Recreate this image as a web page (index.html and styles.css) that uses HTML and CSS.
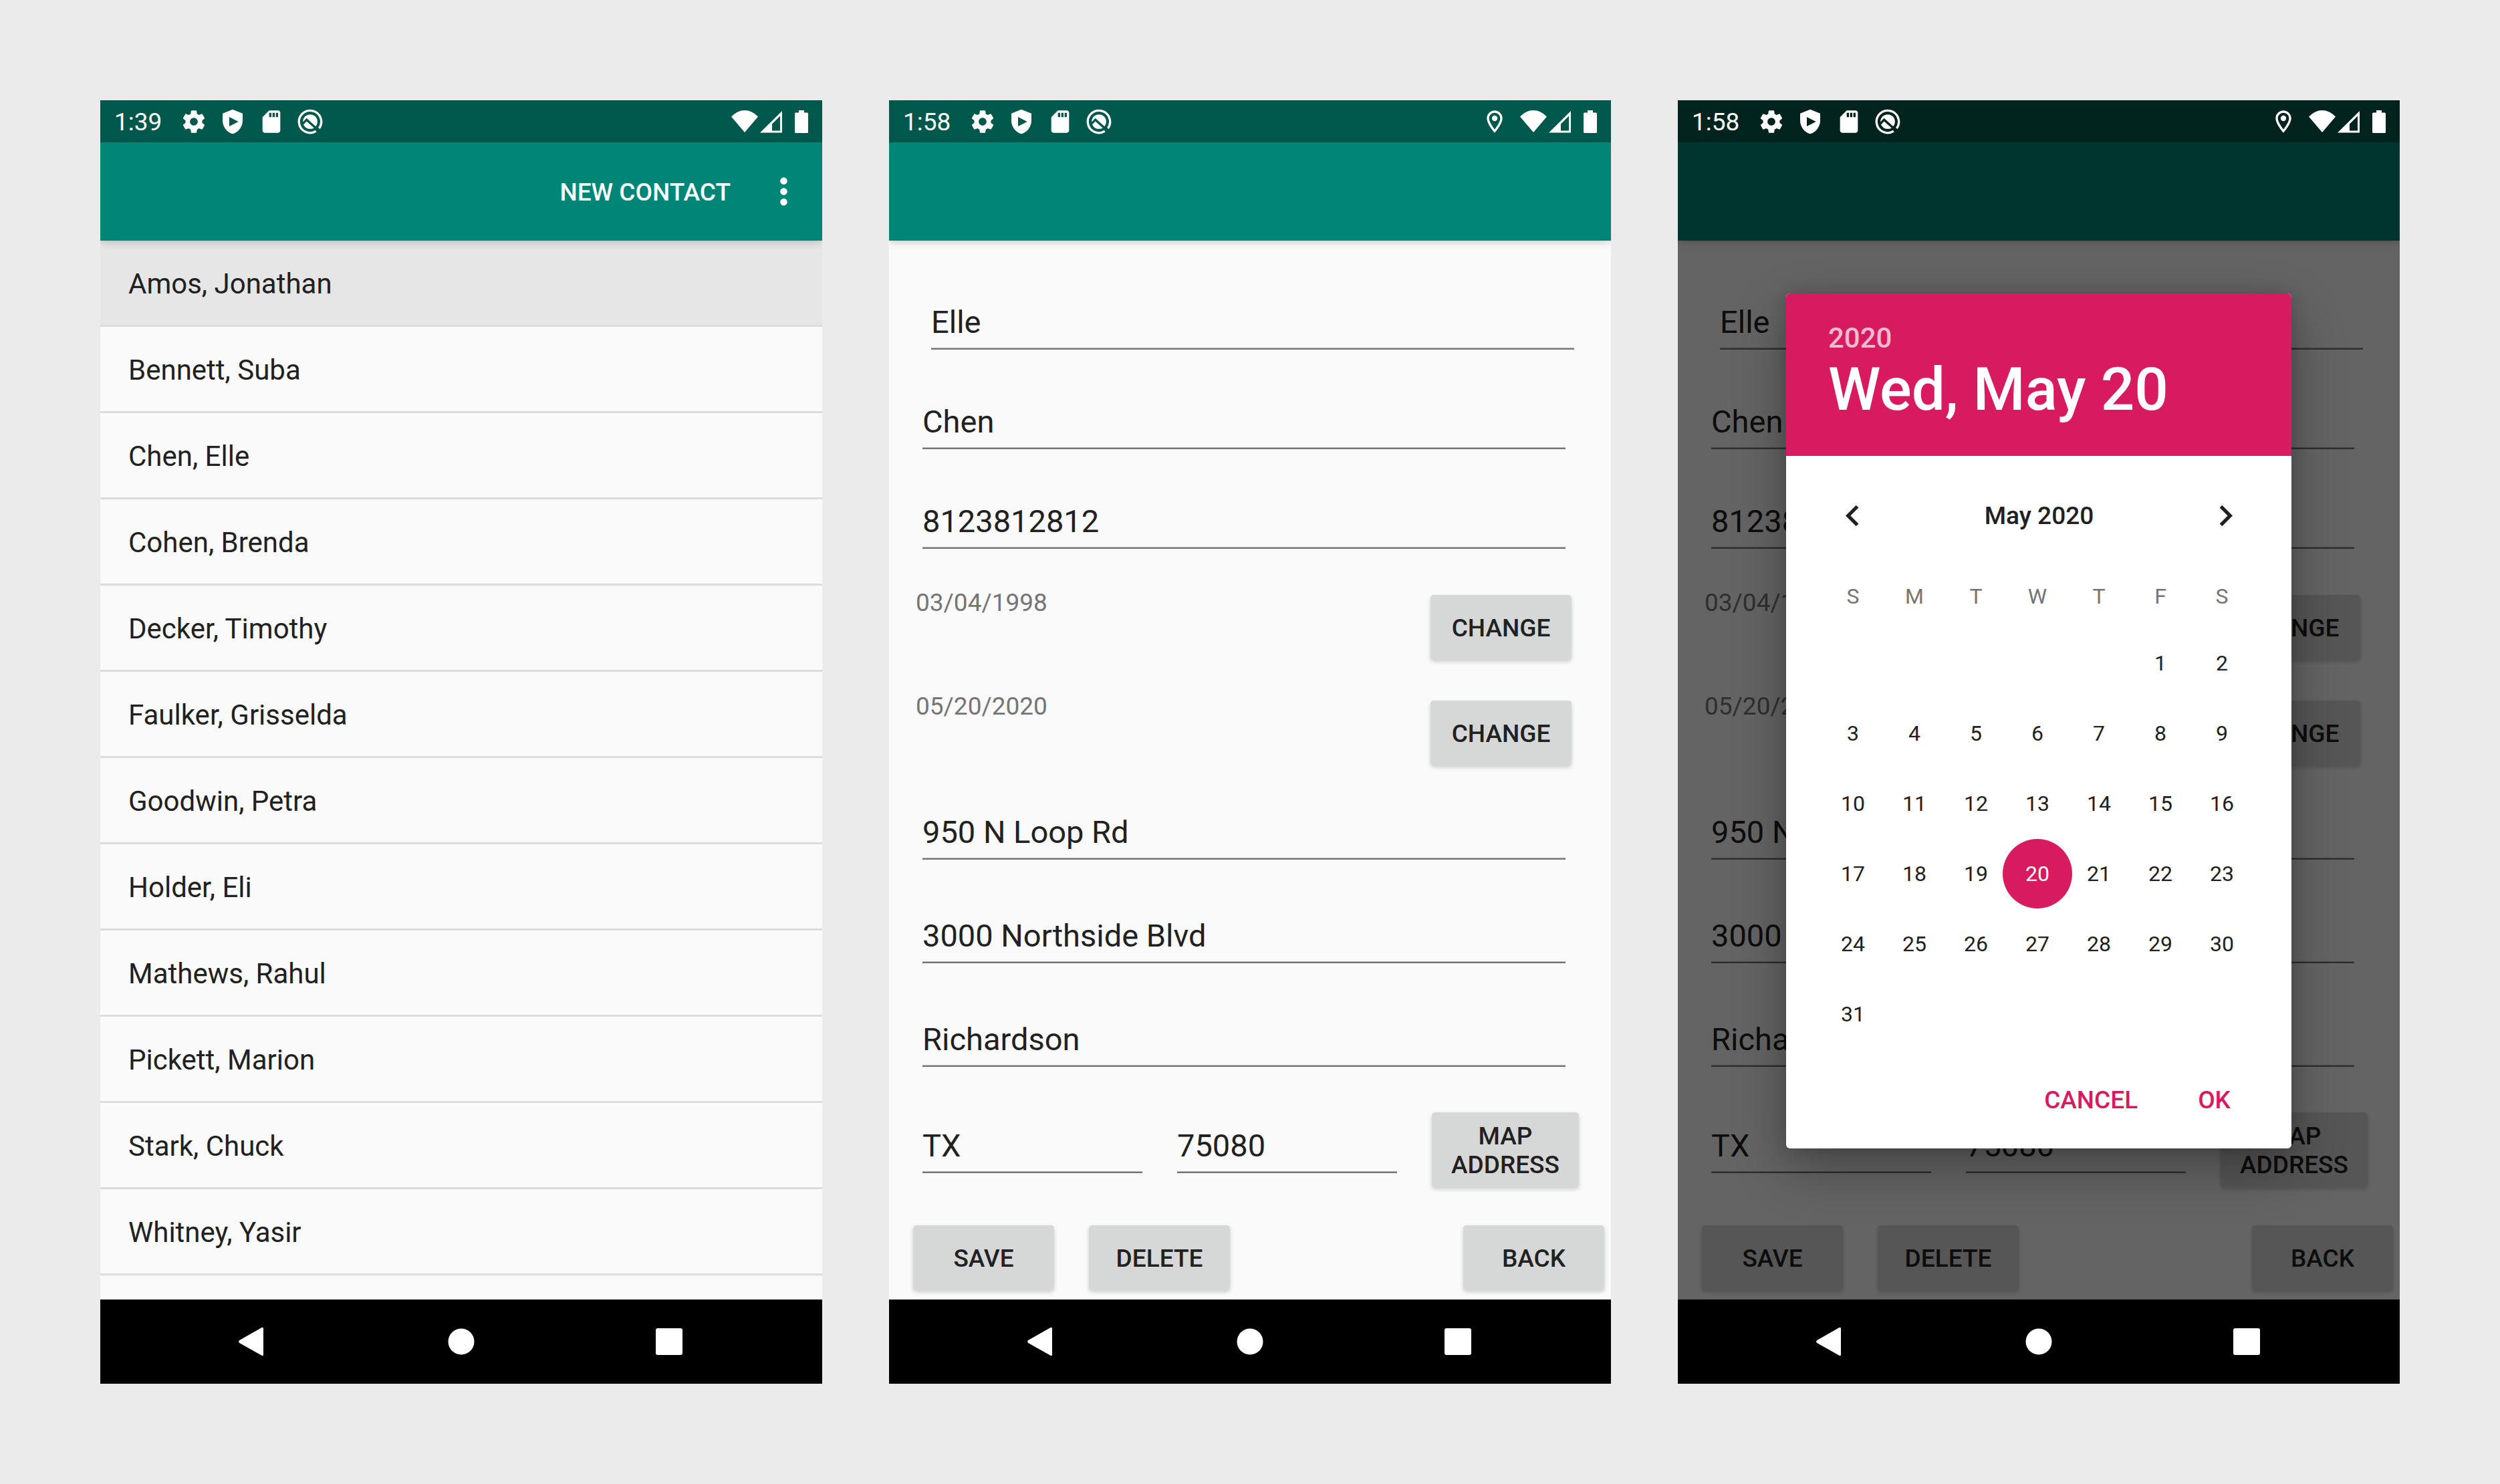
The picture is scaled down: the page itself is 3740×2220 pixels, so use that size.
FILE: index.html
```html
<!DOCTYPE html>
<html lang="en">
<head>
<meta charset="utf-8">
<meta name="viewport" content="width=device-width, initial-scale=1">
<title>Contacts</title>
<link rel="stylesheet" href="styles.css">
</head>
<body>
<svg class="sprite" aria-hidden="true">
  <symbol id="i-gear" viewBox="0 0 24 24"><path d="M19.43 12.98c.04-.32.07-.64.07-.98s-.03-.66-.07-.98l2.11-1.65c.19-.15.24-.42.12-.64l-2-3.46c-.12-.22-.39-.3-.61-.22l-2.49 1c-.52-.4-1.08-.73-1.69-.98l-.38-2.65C14.46 2.18 14.25 2 14 2h-4c-.25 0-.46.18-.49.42l-.38 2.65c-.61.25-1.17.59-1.69.98l-2.49-1c-.23-.09-.49 0-.61.22l-2 3.46c-.13.22-.07.49.12.64l2.11 1.65c-.04.32-.07.65-.07.98s.03.66.07.98l-2.11 1.65c-.19.15-.24.42-.12.64l2 3.46c.12.22.39.3.61.22l2.49-1c.52.4 1.08.73 1.69.98l.38 2.65c.03.24.24.42.49.42h4c.25 0 .46-.18.49-.42l.38-2.65c.61-.25 1.17-.59 1.69-.98l2.49 1c.23.09.49 0 .61-.22l2-3.46c.12-.22.07-.49-.12-.64l-2.11-1.65zM12 15.5c-1.93 0-3.5-1.57-3.5-3.5s1.57-3.5 3.5-3.5 3.5 1.57 3.5 3.5-1.57 3.5-3.5 3.5z"/></symbol>
  <symbol id="i-shield" viewBox="0 0 24 24"><path fill-rule="evenodd" d="M12 1L3 4.600V11c0 5.550 3.840 10.740 9 12 5.160-1.260 9-6.450 9-12V4.600zM9 7.800L17.200 12 9 16.200z"/></symbol>
  <symbol id="i-sd" viewBox="0 0 24 24"><path d="M18 2h-8L4.020 8 4 20c0 1.100.9 2 2 2h12c1.100 0 2-.9 2-2V4c0-1.100-.9-2-2-2zm-6 6h-2V4h2v4zm3 0h-2V4h2v4zm3 0h-2V4h2v4z"/></symbol>
  <symbol id="i-debug" viewBox="0 0 24 24"><path fill="none" stroke="currentColor" stroke-width="2" d="M17.300 20.500A10 10 0 1 1 20 18"/><circle cx="12" cy="12" r="6.500"/><path class="cut" d="M4.500 14.800L8.800 10.300l10.700 9.700"/></symbol>
  <symbol id="i-pin" viewBox="0 0 24 24"><path d="M12 2C8.130 2 5 5.130 5 9c0 5.250 7 13 7 13s7-7.750 7-13c0-3.870-3.130-7-7-7zM7 9c0-2.760 2.240-5 5-5s5 2.240 5 5c0 2.880-2.880 7.190-5 9.880C9.920 16.210 7 11.850 7 9z"/><circle cx="12" cy="9" r="2.500"/></symbol>
  <symbol id="i-wifi" viewBox="0 0 40 34"><path d="M20 33L0 9.500Q9 0 20 0t20 9.500z"/></symbol>
  <symbol id="i-signal" viewBox="0 0 33 34"><path fill-rule="evenodd" d="M33 1v32.500H0zM30 8.500L18 20.500V30.500h12z"/></symbol>
  <symbol id="i-battery" viewBox="0 0 20 34"><path d="M6 0h8v3.500h4.500q1.500 0 1.500 1.500v27.500q0 1.500-1.500 1.500h-17Q0 34 0 32.500V5q0-1.500 1.500-1.500H6z"/></symbol>
  <symbol id="i-more" viewBox="0 0 24 24"><path d="M12 8c1.100 0 2-.9 2-2s-.9-2-2-2-2 .9-2 2 .9 2 2 2zm0 2c-1.100 0-2 .9-2 2s.9 2 2 2 2-.9 2-2-.9-2-2-2zm0 6c-1.100 0-2 .9-2 2s.9 2 2 2 2-.9 2-2-.9-2-2-2z"/></symbol>
  <symbol id="i-prev" viewBox="0 0 24 24"><path d="M15.410 7.410L14 6l-6 6 6 6 1.410-1.410L10.830 12z"/></symbol>
  <symbol id="i-next" viewBox="0 0 24 24"><path d="M10 6L8.590 7.410 13.170 12l-4.580 4.590L10 18l6-6z"/></symbol>
  <symbol id="i-back" viewBox="0 0 44 44"><path d="M34.500 .9Q37 0 37 2.500v39Q37 44 34.500 42.800L1.200 24Q-1 22 1.200 20z"/></symbol>
  <symbol id="i-home" viewBox="0 0 44 44"><circle cx="22" cy="22" r="19.500"/></symbol>
  <symbol id="i-recent" viewBox="0 0 44 44"><rect x="2" y="2" width="40" height="40" rx="3"/></symbol>
</svg>

<main class="board">

  <section class="phone" aria-label="Contact list">
    <div class="status">
      <span class="time">1:39</span>
      <div class="notes">
        <svg class="note"><use href="#i-gear"/></svg>
        <svg class="note"><use href="#i-shield"/></svg>
        <svg class="note"><use href="#i-sd"/></svg>
        <svg class="note"><use href="#i-debug"/></svg>
      </div>
      <svg class="wifi"><use href="#i-wifi"/></svg>
      <svg class="signal"><use href="#i-signal"/></svg>
      <svg class="battery"><use href="#i-battery"/></svg>
    </div>
    <div class="app">
      <header class="appbar">
        <button class="action" type="button">NEW CONTACT</button>
        <button class="more" type="button" aria-label="More options"><svg class="icon"><use href="#i-more"/></svg></button>
      </header>
      <ul class="contacts">
        <li class="contact selected">Amos, Jonathan</li>
        <li class="contact">Bennett, Suba</li>
        <li class="contact">Chen, Elle</li>
        <li class="contact">Cohen, Brenda</li>
        <li class="contact">Decker, Timothy</li>
        <li class="contact">Faulker, Grisselda</li>
        <li class="contact">Goodwin, Petra</li>
        <li class="contact">Holder, Eli</li>
        <li class="contact">Mathews, Rahul</li>
        <li class="contact">Pickett, Marion</li>
        <li class="contact">Stark, Chuck</li>
        <li class="contact">Whitney, Yasir</li>
      </ul>
    </div>
    <nav class="navbar" aria-label="System">
      <button class="nav" type="button" aria-label="Back"><svg class="navicon"><use href="#i-back"/></svg></button>
      <button class="nav" type="button" aria-label="Home"><svg class="navicon"><use href="#i-home"/></svg></button>
      <button class="nav" type="button" aria-label="Recent apps"><svg class="navicon"><use href="#i-recent"/></svg></button>
    </nav>
  </section>

  <section class="phone" aria-label="Edit contact">
    <div class="status">
      <span class="time">1:58</span>
      <div class="notes">
        <svg class="note"><use href="#i-gear"/></svg>
        <svg class="note"><use href="#i-shield"/></svg>
        <svg class="note"><use href="#i-sd"/></svg>
        <svg class="note"><use href="#i-debug"/></svg>
      </div>
      <svg class="note pin"><use href="#i-pin"/></svg>
      <svg class="wifi"><use href="#i-wifi"/></svg>
      <svg class="signal"><use href="#i-signal"/></svg>
      <svg class="battery"><use href="#i-battery"/></svg>
    </div>
    <div class="app">
      <header class="appbar"></header>
      <form class="form">
        <div class="fields person">
          <input class="field first" type="text" aria-label="First name" value="Elle">
          <input class="field" type="text" aria-label="Last name" value="Chen">
          <input class="field" type="tel" aria-label="Phone" value="8123812812">
        </div>
        <div class="dates">
          <div class="datelist"><span class="date">03/04/1998</span><span class="date">05/20/2020</span></div>
          <div class="changes">
            <button class="btn" type="button" aria-label="Change birthday">CHANGE</button>
            <button class="btn" type="button" aria-label="Change date met">CHANGE</button>
          </div>
        </div>
        <div class="fields address">
          <input class="field" type="text" aria-label="Address line 1" value="950 N Loop Rd">
          <input class="field" type="text" aria-label="Address line 2" value="3000 Northside Blvd">
          <input class="field" type="text" aria-label="City" value="Richardson">
        </div>
        <div class="region">
          <input class="field" type="text" aria-label="State" value="TX">
          <input class="field" type="text" aria-label="ZIP code" value="75080">
          <button class="btn map" type="button">MAP ADDRESS</button>
        </div>
        <div class="actions">
          <button class="btn" type="button">SAVE</button>
          <button class="btn" type="button">DELETE</button>
          <button class="btn last" type="button">BACK</button>
        </div>
      </form>
    </div>
    <nav class="navbar" aria-label="System">
      <button class="nav" type="button" aria-label="Back"><svg class="navicon"><use href="#i-back"/></svg></button>
      <button class="nav" type="button" aria-label="Home"><svg class="navicon"><use href="#i-home"/></svg></button>
      <button class="nav" type="button" aria-label="Recent apps"><svg class="navicon"><use href="#i-recent"/></svg></button>
    </nav>
  </section>

  <section class="phone" aria-label="Pick a date">
    <div class="status dimmed">
      <span class="time">1:58</span>
      <div class="notes">
        <svg class="note"><use href="#i-gear"/></svg>
        <svg class="note"><use href="#i-shield"/></svg>
        <svg class="note"><use href="#i-sd"/></svg>
        <svg class="note"><use href="#i-debug"/></svg>
      </div>
      <svg class="note pin"><use href="#i-pin"/></svg>
      <svg class="wifi"><use href="#i-wifi"/></svg>
      <svg class="signal"><use href="#i-signal"/></svg>
      <svg class="battery"><use href="#i-battery"/></svg>
    </div>
    <div class="app">
      <header class="appbar"></header>
      <form class="form">
        <div class="fields person">
          <input class="field first" type="text" aria-label="First name" value="Elle">
          <input class="field" type="text" aria-label="Last name" value="Chen">
          <input class="field" type="tel" aria-label="Phone" value="8123812812">
        </div>
        <div class="dates">
          <div class="datelist"><span class="date">03/04/1998</span><span class="date">05/20/2020</span></div>
          <div class="changes">
            <button class="btn" type="button" aria-label="Change birthday">CHANGE</button>
            <button class="btn" type="button" aria-label="Change date met">CHANGE</button>
          </div>
        </div>
        <div class="fields address">
          <input class="field" type="text" aria-label="Address line 1" value="950 N Loop Rd">
          <input class="field" type="text" aria-label="Address line 2" value="3000 Northside Blvd">
          <input class="field" type="text" aria-label="City" value="Richardson">
        </div>
        <div class="region">
          <input class="field" type="text" aria-label="State" value="TX">
          <input class="field" type="text" aria-label="ZIP code" value="75080">
          <button class="btn map" type="button">MAP ADDRESS</button>
        </div>
        <div class="actions">
          <button class="btn" type="button">SAVE</button>
          <button class="btn" type="button">DELETE</button>
          <button class="btn last" type="button">BACK</button>
        </div>
      </form>
      <div class="scrim">
        <div class="dialog" role="dialog" aria-label="Date picker">
          <header class="picked">
            <div class="year">2020</div>
            <div class="day">Wed, May 20</div>
          </header>
          <div class="month">
            <button class="arrow" type="button" aria-label="Previous month"><svg class="icon"><use href="#i-prev"/></svg></button>
            <span class="monthname">May 2020</span>
            <button class="arrow" type="button" aria-label="Next month"><svg class="icon"><use href="#i-next"/></svg></button>
          </div>
          <table class="calendar">
            <thead>
              <tr><th>S</th><th>M</th><th>T</th><th>W</th><th>T</th><th>F</th><th>S</th></tr>
            </thead>
            <tbody>
              <tr><td></td><td></td><td></td><td></td><td></td><td>1</td><td>2</td></tr>
              <tr><td>3</td><td>4</td><td>5</td><td>6</td><td>7</td><td>8</td><td>9</td></tr>
              <tr><td>10</td><td>11</td><td>12</td><td>13</td><td>14</td><td>15</td><td>16</td></tr>
              <tr><td>17</td><td>18</td><td>19</td><td><span class="today">20</span></td><td>21</td><td>22</td><td>23</td></tr>
              <tr><td>24</td><td>25</td><td>26</td><td>27</td><td>28</td><td>29</td><td>30</td></tr>
              <tr><td>31</td><td></td><td></td><td></td><td></td><td></td><td></td></tr>
            </tbody>
          </table>
          <footer class="choices">
            <button class="choice" type="button">CANCEL</button>
            <button class="choice" type="button">OK</button>
          </footer>
        </div>
      </div>
    </div>
    <nav class="navbar" aria-label="System">
      <button class="nav" type="button" aria-label="Back"><svg class="navicon"><use href="#i-back"/></svg></button>
      <button class="nav" type="button" aria-label="Home"><svg class="navicon"><use href="#i-home"/></svg></button>
      <button class="nav" type="button" aria-label="Recent apps"><svg class="navicon"><use href="#i-recent"/></svg></button>
    </nav>
  </section>

</main>
</body>
</html>
```
FILE: styles.css
```css
:root {
  --primary: #008577;
  --primary-dark: #00574b;
  --accent: #d81b60;
  --surface: #fafafa;
  --ink: #212121;
  --muted: #757575;
}

*,
*::before,
*::after {
  box-sizing: border-box;
}

body {
  margin: 0;
  background: #ebebeb;
  color: var(--ink);
  font-family: Roboto, "Liberation Sans", sans-serif;
  font-size: 42px;
}

button {
  margin: 0;
  padding: 0;
  border: 0;
  background: none;
  color: inherit;
  font: 500 37px/43px Roboto, "Liberation Sans", sans-serif;
}

svg {
  display: block;
  flex: none;
  fill: currentColor;
}

.sprite {
  position: absolute;
  width: 0;
  height: 0;
}

.icon {
  width: 63px;
  height: 63px;
}

/* Three phones side by side */
.board {
  display: grid;
  grid-template-columns: repeat(3, minmax(0, 1fr));
  gap: 100px;
  padding: 150px;
}

.phone {
  display: flex;
  flex-direction: column;
  background: var(--surface);
}

/* Status bar */
.status {
  --bar: var(--primary-dark);
  display: flex;
  align-items: center;
  height: 63px;
  padding: 0 21px;
  background: var(--bar);
  color: #fff;
}

.dimmed {
  --bar: #00231e;
}

.time {
  padding-top: 2px;
  font-size: 37px;
  line-height: 43px;
}

.notes {
  display: flex;
  gap: 18px;
  margin: 0 auto 0 28px;
}

.note {
  width: 40px;
  height: 40px;
}

.cut {
  fill: none;
  stroke: var(--bar);
  stroke-width: 2px;
}

.pin {
  margin-right: 18px;
}

.wifi {
  width: 40px;
  height: 34px;
}

.signal {
  width: 33px;
  height: 34px;
  margin: 0 19px 0 3px;
}

.battery {
  width: 20px;
  height: 34px;
}

/* App area */
.app {
  position: relative;
  display: flex;
  flex: 1;
  flex-direction: column;
  overflow: hidden;
}

.appbar {
  display: flex;
  align-items: center;
  justify-content: flex-end;
  gap: 48px;
  height: 147px;
  padding-right: 26px;
  background: var(--primary);
  box-shadow: 0 2px 12px rgba(0, 0, 0, .2);
  color: #fff;
  z-index: 1;
}

.action {
  padding-top: 2px;
}

.contacts {
  margin: 0;
  padding: 0 0 36px;
  list-style: none;
}

.contact {
  padding: 40px 42px 36px;
  border-bottom: 3px solid #dcdcdc;
  line-height: 50px;
}

.selected {
  background: #e6e6e6;
}

/* Contact form */
.form {
  display: flex;
  flex: 1;
  flex-direction: column;
  padding: 94px 10px 14px 36px;
}

.fields {
  display: flex;
  flex-direction: column;
  padding: 0 58px 0 14px;
}

.person {
  gap: 80px;
}

.address {
  gap: 86px;
  margin: 72px 0 68px;
}

.field {
  min-width: 0;
  height: 69px;
  padding: 0 0 12px;
  border: 0;
  border-bottom: 2px solid var(--muted);
  border-radius: 0;
  outline: 0;
  background: none;
  box-shadow: inset 0 -1px #b4b4b4;
  color: var(--ink);
  font: 47px/55px Roboto, "Liberation Sans", sans-serif;
}

.first {
  margin: 0 -13px 0 13px;
}

.dates {
  display: flex;
  justify-content: space-between;
  margin-top: 59px;
  padding: 0 49px 0 4px;
}

.datelist {
  display: flex;
  flex-direction: column;
  gap: 112px;
  color: var(--muted);
  font-size: 37px;
  line-height: 43px;
}

.changes {
  display: flex;
  flex-direction: column;
  gap: 61px;
  padding-top: 10px;
}

.btn {
  width: 211px;
  height: 97px;
  padding-top: 2px;
  border-radius: 5px;
  background: #d6d7d7;
  box-shadow: 0 3px 6px rgba(0, 0, 0, .18);
}

.region {
  display: flex;
  align-items: center;
  gap: 52px;
  padding: 0 38px 0 14px;
}

.region .field {
  flex: 1;
}

.map {
  flex: none;
  width: 220px;
  height: 112px;
}

.actions {
  display: flex;
  gap: 52px;
  margin-top: auto;
  padding-top: 57px;
}

.last {
  margin-left: auto;
}

/* System navigation */
.navbar {
  display: flex;
  justify-content: center;
  height: 126px;
  background: #000;
  color: #fff;
}

.nav {
  display: flex;
  align-items: center;
  justify-content: center;
  flex: 0 1 311px;
}

.navicon {
  width: 44px;
  height: 44px;
}

/* Date picker */
.scrim {
  position: absolute;
  inset: 0;
  z-index: 2;
  display: flex;
  align-items: center;
  justify-content: center;
  background: rgba(0, 0, 0, .6);
}

.dialog {
  width: 70%;
  border-radius: 6px;
  overflow: hidden;
  background: #fff;
  box-shadow: 0 30px 80px rgba(0, 0, 0, .3), 0 0 24px rgba(0, 0, 0, .15);
}

.picked {
  padding: 42px 63px 47px;
  background: var(--accent);
  color: #fff;
  font-weight: 500;
}

.year {
  line-height: 50px;
  opacity: .7;
}

.day {
  font-size: 89px;
  line-height: 104px;
}

.month {
  display: flex;
  align-items: center;
  justify-content: space-between;
  height: 178px;
  padding: 0 67px 0 68px;
}

.monthname {
  font-size: 37px;
  font-weight: 500;
}

.calendar {
  width: 644px;
  max-width: 100%;
  margin: 0 0 0 54px;
  border-collapse: collapse;
  table-layout: fixed;
  font-size: 32px;
  line-height: 38px;
  text-align: center;
}

.calendar th {
  height: 79px;
  padding: 0 0 16px;
  color: var(--muted);
  font-weight: 400;
}

.calendar td {
  height: 105px;
  padding: 0;
}

.today {
  display: block;
  width: 104px;
  margin: 0 -6px;
  border-radius: 50%;
  background: var(--accent);
  color: #fff;
  line-height: 104px;
}

.choices {
  display: flex;
  justify-content: flex-end;
  gap: 90px;
  padding: 55px 91px 51px;
  color: var(--accent);
}
```
